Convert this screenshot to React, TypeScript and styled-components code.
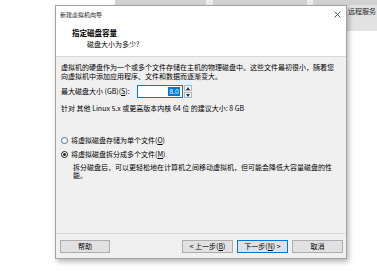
import React from "react";
import styled, { createGlobalStyle } from "styled-components";

const GlobalStyle = createGlobalStyle`
  html, body {
    margin: 0;
    padding: 0;
  }
  body {
    font-family: "Noto Sans CJK SC", "Noto Sans", sans-serif;
    color: #000;
  }
`;

const Page = styled.div`
  position: relative;
  width: 377px;
  height: 280px;
  overflow: hidden;
  background: #fff;
  display: flex;
  flex-direction: column;
`;

// what lies behind the dialog
const TabStrip = styled.div`
  display: flex;
  height: 5px;
`;

const Tab = styled.div<{ $w: number; $tone: "blank" | "tab" | "gap" }>`
  width: ${(p) => p.$w}px;
  flex: 0 0 auto;
  background: ${(p) =>
    p.$tone === "tab" ? "#d2d2d2" : p.$tone === "gap" ? "#ececec" : "#fff"};
`;

const BackRow = styled.div`
  display: flex;
  justify-content: flex-end;
`;

const SidePanel = styled.div`
  width: 30px;
  height: 26px;
  box-sizing: border-box;
  padding: 1px 0 0 1px;
  background: #e2e2e2;
  font-size: 7px;
  line-height: 10px;
  color: #222;
  white-space: nowrap;
`;

// the wizard window
const Dialog = styled.div`
  position: absolute;
  left: 55px;
  top: 5px;
  width: 292px;
  height: 254px;
  box-sizing: border-box;
  border: 1px solid #a3a3a3;
  background: #f0f0f0;
  box-shadow: 2px 3px 5px rgba(0, 0, 0, 0.28);
  display: flex;
  flex-direction: column;
`;

const TitleBar = styled.div`
  height: 17px;
  display: flex;
  align-items: center;
  justify-content: space-between;
  padding: 0 5px 0 4px;
  background: #fff;
  font-size: 6px;
  color: #222;
`;

const Header = styled.div`
  background: #fff;
  padding: 5px 0 7px 16px;
  border-bottom: 1px solid #d8d8d8;
`;

const HeaderTitle = styled.div`
  font-size: 7.5px;
  font-weight: 700;
  line-height: 10px;
`;

const HeaderSub = styled.div`
  font-size: 7px;
  line-height: 10px;
  margin: 1px 0 0 15px;
`;

const Body = styled.div`
  flex: 1;
  padding: 6px 5px 0 5px;
  font-size: 7px;
  line-height: 8.5px;
`;

const Para = styled.p`
  margin: 0;
`;

const SizeRow = styled.div`
  display: flex;
  align-items: center;
  margin-top: 5px;
  height: 13px;
`;

const Label = styled.span`
  width: 76px;
  white-space: nowrap;
`;

const Field = styled.div`
  width: 46px;
  height: 13px;
  box-sizing: border-box;
  border: 1px solid #0078d7;
  background: #fff;
  display: flex;
  align-items: center;
  justify-content: flex-end;
  padding-right: 2px;
`;

const Selected = styled.span`
  background: #0078d7;
  color: #fff;
  line-height: 9px;
  padding: 0 1px;
`;

const Spinner = styled.div`
  width: 8px;
  height: 13px;
  margin-left: 1px;
  display: flex;
  flex-direction: column;
  gap: 1px;
`;

const SpinBtn = styled.div`
  flex: 1;
  box-sizing: border-box;
  border: 1px solid #b5b5b5;
  background: #f2f2f2;
  display: flex;
  align-items: center;
  justify-content: center;
`;

const Hint = styled.p`
  margin: 6px 0 0 0;
  white-space: nowrap;
`;

const RadioRow = styled.label<{ $gap: number }>`
  display: flex;
  align-items: center;
  gap: 3px;
  height: 10px;
  margin-top: ${(p) => p.$gap}px;
`;

const RadioDot = styled.span<{ $on?: boolean }>`
  width: 7px;
  height: 7px;
  box-sizing: border-box;
  border-radius: 50%;
  border: 1px solid ${(p) => (p.$on ? "#222" : "#4a6f9a")};
  background: #fff;
  display: flex;
  align-items: center;
  justify-content: center;
  &::after {
    content: "";
    width: 3px;
    height: 3px;
    border-radius: 50%;
    background: ${(p) => (p.$on ? "#222" : "transparent")};
  }
`;

const Desc = styled.p`
  margin: 3px 0 0 12px;
`;

const Footer = styled.div`
  border-top: 1px solid #d8d8d8;
  display: flex;
  align-items: center;
  padding: 6px 3px 5px 4px;
`;

const Button = styled.button<{ $primary?: boolean; $w?: number }>`
  width: ${(p) => p.$w ?? 51}px;
  height: 13px;
  box-sizing: border-box;
  padding: 0;
  border: 1px solid ${(p) => (p.$primary ? "#0078d7" : "#adadad")};
  background: #e1e1e1;
  font-family: inherit;
  font-size: 7px;
  line-height: 11px;
  color: #000;
`;

const Spacer = styled.div`
  flex: 1;
`;

const Actions = styled.div`
  display: flex;
  gap: 4px;
`;

const Key = styled.u`
  text-decoration-thickness: 0.5px;
  text-underline-offset: 1px;
`;

const Close = () => (
  <svg width="7" height="7" viewBox="0 0 7 7">
    <path d="M0.5 0.5 L6.5 6.5 M6.5 0.5 L0.5 6.5" stroke="#333" strokeWidth="0.8" />
  </svg>
);

const Arrow = ({ up }: { up?: boolean }) => (
  <svg width="4" height="3" viewBox="0 0 4 3">
    <path d={up ? "M0 3 L2 0 L4 3 Z" : "M0 0 L2 3 L4 0 Z"} fill="#333" />
  </svg>
);

export default function App() {
  return (
    <>
      <GlobalStyle />
      <Page>
        <TabStrip>
          <Tab $w={115} $tone="blank" />
          <Tab $w={91} $tone="tab" />
          <Tab $w={7} $tone="gap" />
          <Tab $w={94} $tone="tab" />
          <Tab $w={6} $tone="gap" />
          <Tab $w={64} $tone="tab" />
        </TabStrip>
        <BackRow>
          <SidePanel>远程服务</SidePanel>
        </BackRow>

        <Dialog>
          <TitleBar>
            <span>新建虚拟机向导</span>
            <Close />
          </TitleBar>
          <Header>
            <HeaderTitle>指定磁盘容量</HeaderTitle>
            <HeaderSub>磁盘大小为多少?</HeaderSub>
          </Header>
          <Body>
            <Para>
              虚拟机的硬盘作为一个或多个文件存储在主机的物理磁盘中。这些文件最初很小，随着您
              <br />
              向虚拟机中添加应用程序、文件和数据而逐渐变大。
            </Para>
            <SizeRow>
              <Label>
                最大磁盘大小 (GB)(<Key>S</Key>):
              </Label>
              <Field>
                <Selected>8.0</Selected>
              </Field>
              <Spinner>
                <SpinBtn>
                  <Arrow up />
                </SpinBtn>
                <SpinBtn>
                  <Arrow />
                </SpinBtn>
              </Spinner>
            </SizeRow>
            <Hint>针对 其他 Linux 5.x 或更高版本内核 64 位 的建议大小: 8 GB</Hint>
            <RadioRow $gap={23}>
              <RadioDot />
              <span>
                将虚拟磁盘存储为单个文件(<Key>O</Key>)
              </span>
            </RadioRow>
            <RadioRow $gap={4}>
              <RadioDot $on />
              <span>
                将虚拟磁盘拆分成多个文件(<Key>M</Key>)
              </span>
            </RadioRow>
            <Desc>
              拆分磁盘后，可以更轻松地在计算机之间移动虚拟机，但可能会降低大容量磁盘的性
              <br />
              能。
            </Desc>
          </Body>
          <Footer>
            <Button $w={50}>帮助</Button>
            <Spacer />
            <Actions>
              <Button>
                &lt; 上一步(<Key>B</Key>)
              </Button>
              <Button $primary>
                下一步(<Key>N</Key>) &gt;
              </Button>
              <Button>取消</Button>
            </Actions>
          </Footer>
        </Dialog>
      </Page>
    </>
  );
}
